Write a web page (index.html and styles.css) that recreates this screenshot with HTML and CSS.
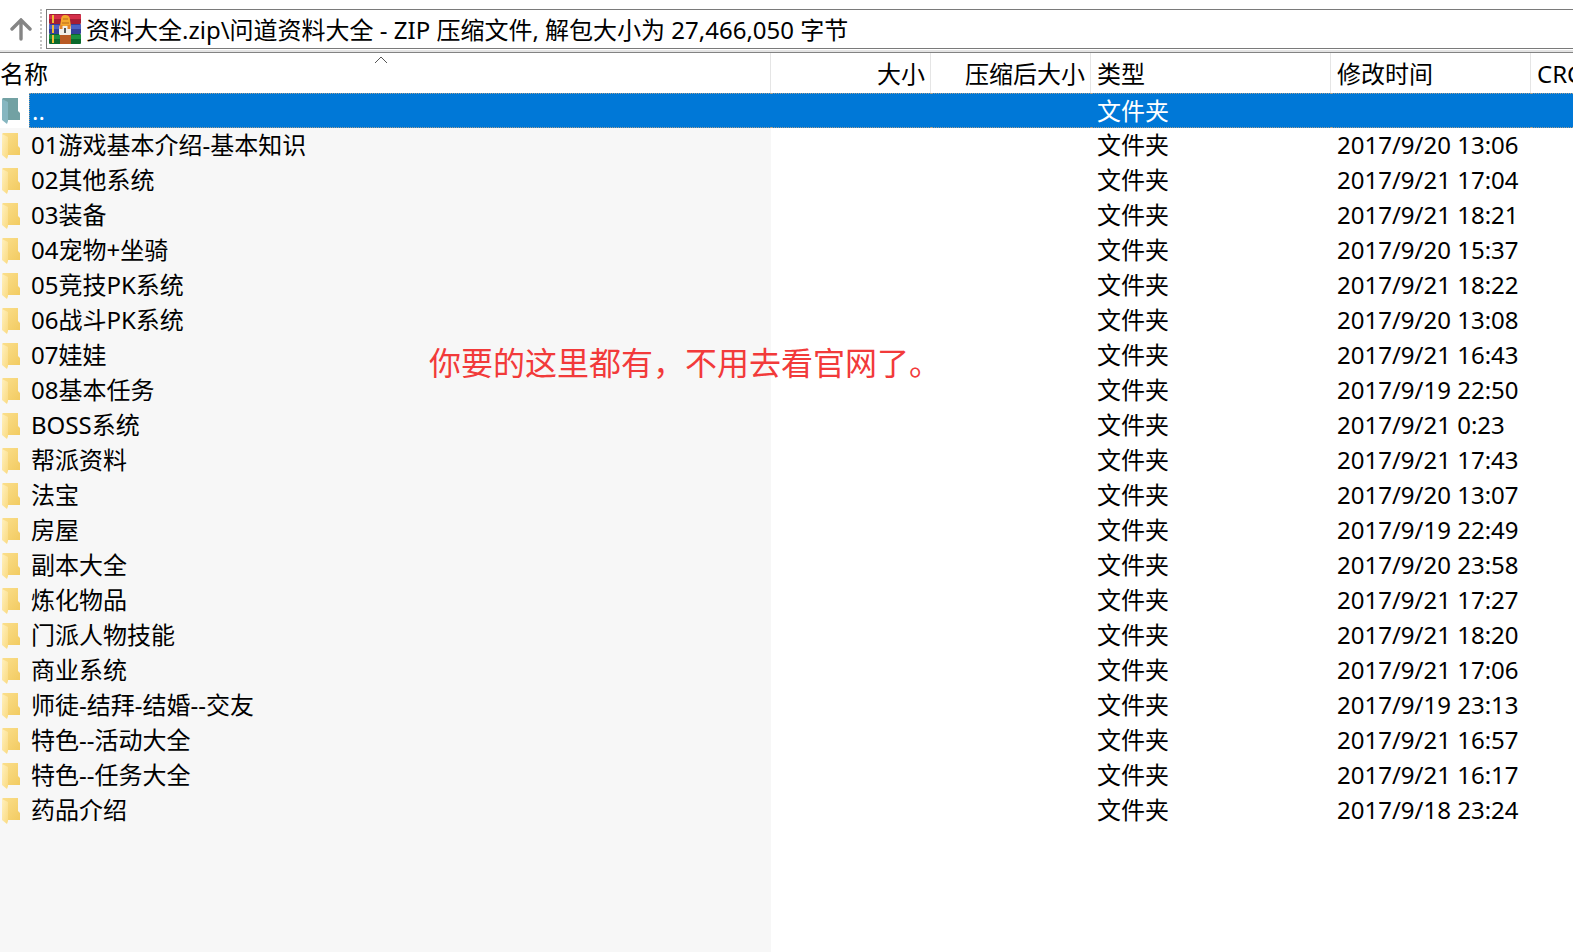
FILE: index.html
```html
<!DOCTYPE html>
<html lang="zh-CN">
  <head>
    <meta charset="UTF-8" />
    <meta name="viewport" content="width=device-width, initial-scale=1.0" />
    <title>资料大全.zip</title>
    <link rel="stylesheet" href="styles.css">
  </head>
  <body>
    <svg width="0" height="0" class="defs" aria-hidden="true">
      <linearGradient id="back" x1="0" y1="0" x2="1" y2="1">
        <stop offset="0" stop-color="#fbdf8c" />
        <stop offset="1" stop-color="#f2cb62" />
      </linearGradient>
      <linearGradient id="front" x1="0" y1="0" x2="1" y2="1">
        <stop offset="0" stop-color="#fff0bd" />
        <stop offset="1" stop-color="#fada80" />
      </linearGradient>
      <symbol id="folder" viewBox="0 0 21 28">
        <path d="M3 1H18V14L20 16V23H7L2 21V2Z" fill="url(#back)" />
        <path d="M2 2L8 5V24L7 27L2 23Z" fill="url(#front)" />
      </symbol>
      <symbol id="folder-up" viewBox="0 0 21 28">
        <path d="M3 1H18V14L20 16V23H7L2 21V2Z" fill="#72a1a3" />
        <path d="M2 2L8 5V24L7 27L2 23Z" fill="#86b6c0" />
      </symbol>
    </svg>

    <div class="address">
      <button class="up" aria-label="向上一级">
        <svg width="22" height="23" viewBox="0 0 22 23">
          <path d="M11 21V3M2 11L11 2L20 11" fill="none" stroke="#858585" stroke-width="3.4" stroke-linecap="round" />
        </svg>
      </button>
      <span class="grip"></span>
      <label class="path">
        <svg width="32" height="30" viewBox="0 0 32 30">
          <rect x="0" y="0" width="32" height="10" rx="1" fill="#a51e35" />
          <rect x="0" y="1" width="32" height="4" fill="#d42f4a" />
          <rect x="0" y="10" width="32" height="10" rx="1" fill="#34409a" />
          <rect x="0" y="11" width="32" height="4" fill="#4d62c4" />
          <rect x="0" y="20" width="32" height="10" rx="1" fill="#0b6a2c" />
          <rect x="0" y="21" width="32" height="4" fill="#1c9040" />
          <path d="M4 1V9M4 11V19M4 21V29" stroke="#efbd35" stroke-width="2" />
          <rect x="11" y="20" width="11" height="10" fill="#b95a24" />
          <path d="M11 12L12 6Q12 1 16 1Q21 1 21 6L22 12Z" fill="#f4a72d" />
          <path d="M14 5H19M13 9H20" stroke="#b8691d" stroke-width="1" />
          <rect x="10" y="12" width="12" height="9" rx="1" fill="#f1eee9" />
          <path d="M12 11V15M20 11V15" stroke="#e2852a" stroke-width="3" />
          <rect x="15" y="14" width="2" height="5" fill="#555" />
        </svg>
        <input type="text" aria-label="路径" value="资料大全.zip\问道资料大全 - ZIP 压缩文件, 解包大小为 27,466,050 字节" readonly />
      </label>
    </div>

    <div class="list">
      <table>
        <colgroup>
          <col class="c-icon" /><col /><col class="c-size" /><col class="c-size" />
          <col class="c-type" /><col class="c-date" /><col class="c-crc" />
        </colgroup>
        <thead>
          <tr>
            <th colspan="2" class="sorted">
              <button>名称</button>
              <svg class="arrow" width="14" height="8" viewBox="0 0 14 8"><path d="M1 7L7 1L13 7" fill="none" stroke="#555" /></svg>
            </th>
            <th class="num"><button>大小</button></th>
            <th class="num"><button>压缩后大小</button></th>
            <th><button>类型</button></th>
            <th><button>修改时间</button></th>
            <th><button>CRC32</button></th>
          </tr>
        </thead>
        <tbody>
          <tr class="selected"><td class="icon"><svg><use href="#folder-up" /></svg></td><td class="name">..</td><td></td><td></td><td>文件夹</td><td></td><td></td></tr>
          <tr><td class="icon"><svg><use href="#folder" /></svg></td><td class="name">01游戏基本介绍-基本知识</td><td></td><td></td><td>文件夹</td><td>2017/9/20 13:06</td><td></td></tr>
          <tr><td class="icon"><svg><use href="#folder" /></svg></td><td class="name">02其他系统</td><td></td><td></td><td>文件夹</td><td>2017/9/21 17:04</td><td></td></tr>
          <tr><td class="icon"><svg><use href="#folder" /></svg></td><td class="name">03装备</td><td></td><td></td><td>文件夹</td><td>2017/9/21 18:21</td><td></td></tr>
          <tr><td class="icon"><svg><use href="#folder" /></svg></td><td class="name">04宠物+坐骑</td><td></td><td></td><td>文件夹</td><td>2017/9/20 15:37</td><td></td></tr>
          <tr><td class="icon"><svg><use href="#folder" /></svg></td><td class="name">05竞技PK系统</td><td></td><td></td><td>文件夹</td><td>2017/9/21 18:22</td><td></td></tr>
          <tr><td class="icon"><svg><use href="#folder" /></svg></td><td class="name">06战斗PK系统</td><td></td><td></td><td>文件夹</td><td>2017/9/20 13:08</td><td></td></tr>
          <tr><td class="icon"><svg><use href="#folder" /></svg></td><td class="name">07娃娃</td><td></td><td></td><td>文件夹</td><td>2017/9/21 16:43</td><td></td></tr>
          <tr><td class="icon"><svg><use href="#folder" /></svg></td><td class="name">08基本任务</td><td></td><td></td><td>文件夹</td><td>2017/9/19 22:50</td><td></td></tr>
          <tr><td class="icon"><svg><use href="#folder" /></svg></td><td class="name">BOSS系统</td><td></td><td></td><td>文件夹</td><td>2017/9/21 0:23</td><td></td></tr>
          <tr><td class="icon"><svg><use href="#folder" /></svg></td><td class="name">帮派资料</td><td></td><td></td><td>文件夹</td><td>2017/9/21 17:43</td><td></td></tr>
          <tr><td class="icon"><svg><use href="#folder" /></svg></td><td class="name">法宝</td><td></td><td></td><td>文件夹</td><td>2017/9/20 13:07</td><td></td></tr>
          <tr><td class="icon"><svg><use href="#folder" /></svg></td><td class="name">房屋</td><td></td><td></td><td>文件夹</td><td>2017/9/19 22:49</td><td></td></tr>
          <tr><td class="icon"><svg><use href="#folder" /></svg></td><td class="name">副本大全</td><td></td><td></td><td>文件夹</td><td>2017/9/20 23:58</td><td></td></tr>
          <tr><td class="icon"><svg><use href="#folder" /></svg></td><td class="name">炼化物品</td><td></td><td></td><td>文件夹</td><td>2017/9/21 17:27</td><td></td></tr>
          <tr><td class="icon"><svg><use href="#folder" /></svg></td><td class="name">门派人物技能</td><td></td><td></td><td>文件夹</td><td>2017/9/21 18:20</td><td></td></tr>
          <tr><td class="icon"><svg><use href="#folder" /></svg></td><td class="name">商业系统</td><td></td><td></td><td>文件夹</td><td>2017/9/21 17:06</td><td></td></tr>
          <tr><td class="icon"><svg><use href="#folder" /></svg></td><td class="name">师徒-结拜-结婚--交友</td><td></td><td></td><td>文件夹</td><td>2017/9/19 23:13</td><td></td></tr>
          <tr><td class="icon"><svg><use href="#folder" /></svg></td><td class="name">特色--活动大全</td><td></td><td></td><td>文件夹</td><td>2017/9/21 16:57</td><td></td></tr>
          <tr><td class="icon"><svg><use href="#folder" /></svg></td><td class="name">特色--任务大全</td><td></td><td></td><td>文件夹</td><td>2017/9/21 16:17</td><td></td></tr>
          <tr><td class="icon"><svg><use href="#folder" /></svg></td><td class="name">药品介绍</td><td></td><td></td><td>文件夹</td><td>2017/9/18 23:24</td><td></td></tr>
        </tbody>
      </table>
      <p class="note">你要的这里都有，不用去看官网了。</p>
    </div>
  </body>
</html>
```
FILE: styles.css
```css
* {
  box-sizing: border-box;
}

body {
  margin: 0;
  min-height: 100vh;
  display: flex;
  flex-direction: column;
  overflow-x: hidden;
  background: #fff;
  color: #000;
  font-family: "Noto Sans", "Noto Sans CJK SC", sans-serif;
  font-size: 24px;
  line-height: 32px;
}

button,
input {
  border: 0;
  padding: 0;
  background: none;
  color: inherit;
  font: inherit;
}

.defs {
  position: absolute;
}

/* address bar */
.address {
  display: flex;
  align-items: center;
  height: 53px;
  padding-top: 9px;
  padding-bottom: 3px;
  border-bottom: 1px solid #838383;
  box-shadow: inset 0 -2px #e4e4e4;
}

.up {
  width: 40px;
  padding-left: 2px;
  line-height: 0;
}

.grip {
  height: 40px;
  border-left: 2px dotted #c4c4c4;
  margin-right: 4px;
}

.path {
  flex: 1;
  display: flex;
  align-items: center;
  gap: 5px;
  height: 40px;
  padding-left: 2px;
  border: 1px solid #7a7a7a;
  border-right: 0;
  background: #fff;
}

.path svg {
  flex: none;
}

.path input {
  flex: 1;
  min-width: 0;
  padding-top: 2px;
  outline: 0;
}

/* file list */
.list {
  position: relative;
  flex: 1;
  display: flex;
  flex-direction: column;
}

.list::after {
  content: "";
  flex: 1;
  width: calc(100% - 802px);
  background: #f7f7f7;
}

table {
  width: 100%;
  table-layout: fixed;
  border-spacing: 0;
}

.c-icon {
  width: 29px;
}

.c-size {
  width: 160px;
}

.c-type {
  width: 240px;
}

.c-date {
  width: 200px;
}

.c-crc {
  width: 42px;
}

th {
  position: relative;
  height: 40px;
  padding: 2px 0 0 6px;
  border-right: 1px solid #e5e5e5;
  font-weight: normal;
  text-align: left;
  overflow: hidden;
}

th:last-child {
  border-right: 0;
}

th.num {
  padding-right: 5px;
  text-align: right;
}

th.sorted {
  padding-left: 0;
}

th button {
  display: block;
  width: 100%;
  text-align: inherit;
}

.arrow {
  position: absolute;
  top: 3px;
  left: calc(50% - 11px);
}

td {
  height: 35px;
  padding: 0 0 2px 6px;
  white-space: nowrap;
}

td.icon {
  padding: 0;
  background: #f7f7f7;
}

td.icon svg {
  display: block;
  width: 21px;
  height: 28px;
}

td.name {
  padding-left: 2px;
  background: #f7f7f7;
}

.selected td:not(.icon) {
  padding-bottom: 0;
  background: #0078d7;
  color: #fff;
  border-top: 1px dotted #a8a090;
  border-bottom: 1px dotted #a8a090;
}

.selected td.icon {
  background: #fff;
}

.selected td.name {
  border-left: 1px dotted #a8a090;
}

.note {
  position: absolute;
  top: 286px;
  left: 429px;
  margin: 0;
  color: #f23a3a;
  font-size: 32px;
  line-height: 48px;
}
```
